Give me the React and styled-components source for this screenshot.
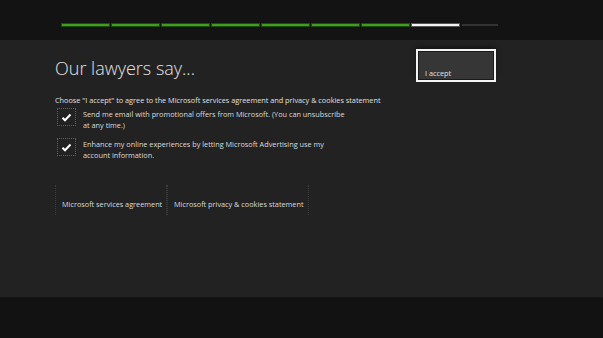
import React from 'react';
import styled, { createGlobalStyle } from 'styled-components';

const GlobalStyle = createGlobalStyle`
  html, body {
    margin: 0;
    padding: 0;
    background: #121212;
  }
  body {
    font-family: "Open Sans", "Noto Sans", sans-serif;
    color: #dcdcdc;
  }
`;

const Page = styled.div`
  display: flex;
  flex-direction: column;
  width: 603px;
  height: 338px;
  overflow: hidden;
`;

const TopBar = styled.div`
  height: 40px;
  box-sizing: border-box;
  padding: 24px 0 0 62px;
  background: #131313;
  display: flex;
  gap: 3px;
`;

const Step = styled.div`
  width: ${(p) => (p.last ? '36px' : '47px')};
  height: 2px;
  background: ${(p) =>
    p.state === 'done' ? '#3f9e1c' : p.state === 'current' ? '#f2f2f2' : '#333'};
  box-shadow: ${(p) =>
    p.state === 'done' ? '0 0 0 1px #1d4a0e' : p.state === 'current' ? '0 0 0 1px #555' : 'none'};
`;

const Main = styled.div`
  height: 257px;
  background: #222;
  box-sizing: border-box;
  padding: 9px 0 0 55px;
  display: grid;
  grid-template-columns: 361px 80px;
  align-items: start;
`;

const Content = styled.div`
  display: flex;
  flex-direction: column;
`;

const Title = styled.h1`
  margin: 8px 0 0;
  font-size: 18px;
  font-weight: 300;
  line-height: 22px;
  color: #e2e2e2;
`;

const Intro = styled.p`
  margin: 16px 0 0;
  font-size: 7.3px;
  line-height: 10px;
  color: #e0e0e0;
  white-space: nowrap;
`;

const Options = styled.div`
  display: flex;
  flex-direction: column;
  gap: 7px;
  margin-top: 3px;
  margin-left: 2px;
`;

const Option = styled.label`
  display: flex;
  gap: 7px;
  align-items: flex-start;
`;

const Box = styled.span`
  flex: none;
  width: 17px;
  height: 16px;
  border: 1px dotted rgba(255, 255, 255, 0.28);
  display: flex;
  align-items: center;
  justify-content: center;
`;

const OptionText = styled.span`
  width: 262px;
  font-size: 7.3px;
  line-height: 11px;
  margin-top: 1px;
  color: #dcdcdc;
`;

const Links = styled.div`
  display: flex;
  margin-top: 24px;
`;

const LinkButton = styled.div`
  height: 30px;
  box-sizing: border-box;
  padding: 8px 0 0 6px;
  display: flex;
  align-items: center;
  white-space: nowrap;
  font-size: 7.3px;
  color: #dcdcdc;
  border-left: 1px dotted rgba(255, 255, 255, 0.12);
  border-right: 1px dotted rgba(255, 255, 255, 0.12);
  width: ${(p) => p.width}px;
`;

const AcceptButton = styled.button`
  width: 80px;
  height: 33px;
  box-sizing: border-box;
  border: 2px solid #f4f4f4;
  box-shadow: inset 0 0 0 1px #1a1a1a, 0 -3px 4px rgba(0, 0, 0, 0.35);
  background: #363636;
  color: #e0e0e0;
  font-family: inherit;
  font-size: 7.3px;
  text-align: left;
  padding: 14px 0 0 7px;
`;

const Bottom = styled.div`
  flex: 1;
  background: #121212;
  border-top: 1px dotted #1a1a1a;
`;

const Check = () => (
  <svg width="11" height="9" viewBox="0 0 11 9">
    <polyline points="1.5,4.8 4,7.3 9.5,1.5" fill="none" stroke="#fff" strokeWidth="2" />
  </svg>
);

const steps = ['done', 'done', 'done', 'done', 'done', 'done', 'done', 'current', 'todo'];

const App = () => {
  return (
    <Page>
      <GlobalStyle />
      <TopBar>
        {steps.map((s, i) => (
          <Step key={i} state={s} last={i === steps.length - 1} />
        ))}
      </TopBar>
      <Main>
        <Content>
          <Title>Our lawyers say...</Title>
          <Intro>
            Choose "I accept" to agree to the Microsoft services agreement and privacy &amp; cookies
            statement
          </Intro>
          <Options>
            <Option>
              <Box>
                <Check />
              </Box>
              <OptionText>
                Send me email with promotional offers from Microsoft. (You can unsubscribe at any
                time.)
              </OptionText>
            </Option>
            <Option>
              <Box>
                <Check />
              </Box>
              <OptionText>
                Enhance my online experiences by letting Microsoft Advertising use my account
                information.
              </OptionText>
            </Option>
          </Options>
          <Links>
            <LinkButton width={112}>Microsoft services agreement</LinkButton>
            <LinkButton width={142}>Microsoft privacy &amp; cookies statement</LinkButton>
          </Links>
        </Content>
        <AcceptButton>I accept</AcceptButton>
      </Main>
      <Bottom />
    </Page>
  );
};

export default App;
